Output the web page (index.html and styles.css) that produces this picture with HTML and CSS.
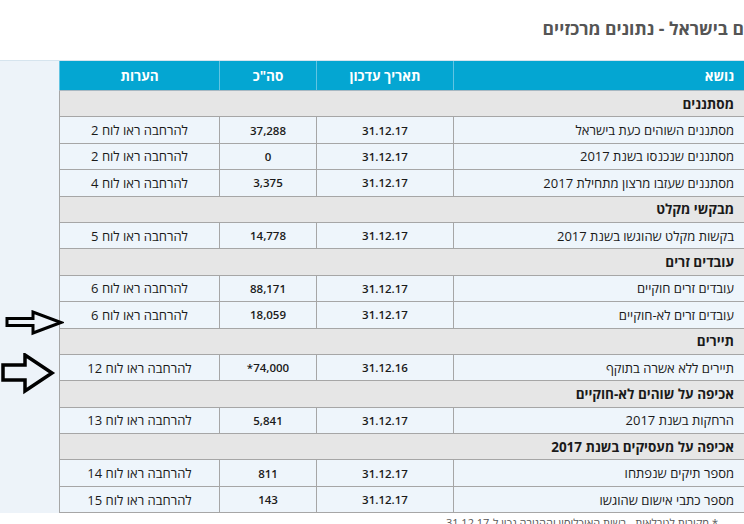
FILE: index.html
```html
<!DOCTYPE html>
<html lang="he">
<head>
<meta charset="utf-8">
<link rel="stylesheet" href="styles.css">
</head>
<body>
<div class="page">
  <header class="top">
    <h1 class="title" dir="rtl">ם בישראל - נתונים מרכזיים</h1>
  </header>
  <section class="panel">
    <table class="data" dir="rtl">
      <colgroup>
        <col class="c-topic"><col class="c-date"><col class="c-total"><col class="c-notes">
      </colgroup>
      <thead>
        <tr><th class="t-topic">נושא</th><th>תאריך עדכון</th><th>סה"כ</th><th>הערות</th></tr>
      </thead>
      <tbody>
        <tr class="sec"><td colspan="4">מסתננים</td></tr>
        <tr><td class="topic">מסתננים השוהים כעת בישראל</td><td class="num">31.12.17</td><td class="num">37,288</td><td>להרחבה ראו לוח 2</td></tr>
        <tr><td class="topic">מסתננים שנכנסו בשנת 2017</td><td class="num">31.12.17</td><td class="num">0</td><td>להרחבה ראו לוח 2</td></tr>
        <tr><td class="topic">מסתננים שעזבו מרצון מתחילת 2017</td><td class="num">31.12.17</td><td class="num">3,375</td><td>להרחבה ראו לוח 4</td></tr>
        <tr class="sec"><td colspan="4">מבקשי מקלט</td></tr>
        <tr><td class="topic">בקשות מקלט שהוגשו בשנת 2017</td><td class="num">31.12.17</td><td class="num">14,778</td><td>להרחבה ראו לוח 5</td></tr>
        <tr class="sec"><td colspan="4">עובדים זרים</td></tr>
        <tr><td class="topic">עובדים זרים חוקיים</td><td class="num">31.12.17</td><td class="num">88,171</td><td>להרחבה ראו לוח 6</td></tr>
        <tr><td class="topic">עובדים זרים לא-חוקיים</td><td class="num">31.12.17</td><td class="num">18,059</td><td>להרחבה ראו לוח 6</td></tr>
        <tr class="sec"><td colspan="4">תיירים</td></tr>
        <tr><td class="topic">תיירים ללא אשרה בתוקף</td><td class="num">31.12.16</td><td class="num">74,000*</td><td>להרחבה ראו לוח 12</td></tr>
        <tr class="sec"><td colspan="4">אכיפה על שוהים לא-חוקיים</td></tr>
        <tr><td class="topic">הרחקות בשנת 2017</td><td class="num">31.12.17</td><td class="num">5,841</td><td>להרחבה ראו לוח 13</td></tr>
        <tr class="sec"><td colspan="4">אכיפה על מעסיקים בשנת 2017</td></tr>
        <tr><td class="topic">מספר תיקים שנפתחו</td><td class="num">31.12.17</td><td class="num">811</td><td>להרחבה ראו לוח 14</td></tr>
        <tr><td class="topic">מספר כתבי אישום שהוגשו</td><td class="num">31.12.17</td><td class="num">143</td><td>להרחבה ראו לוח 15</td></tr>
      </tbody>
    </table>
    <svg class="arrow arrow-1" width="64" height="26" viewBox="0 0 64 26">
      <path d="M7 8.5 H33 V2 L61 12.5 L33 23 V15.5 H7 Z" fill="none" stroke="#000" stroke-width="3" stroke-linejoin="miter"/>
    </svg>
    <svg class="arrow arrow-2" width="56" height="42" viewBox="0 0 56 42">
      <path d="M3 12 H25 V2 L52 20 L25 38 V27 H3 Z" fill="none" stroke="#000" stroke-width="3.5" stroke-linejoin="miter"/>
    </svg>
  </section>
  <p class="foot" dir="rtl">* מקורות לטבלאות - רשות האוכלוסין וההגירה נכון ל-31.12.17</p>
</div>
</body>
</html>
```
FILE: styles.css
```css
html, body {
  margin: 0;
  padding: 0;
  background: #fff;
  overflow: hidden;
  width: 744px;
  height: 524px;
}
.page {
  width: 744px;
  font-family: "Open Sans", "Noto Sans", "DejaVu Sans", sans-serif;
  color: #1a1a1a;
}
.top {
  height: 60px;
  display: flex;
  justify-content: flex-end;
  align-items: center;
}
.title {
  margin: 0;
  font-size: 17.5px;
  font-weight: 700;
  color: #555;
  white-space: nowrap;
  position: relative;
  top: -2px;
}
.panel {
  position: relative;
  background: #edf3f9;
  border-top: 1px solid #d6e4ee;
  padding-left: 59px;
}
.data {
  width: 688px;
  border-collapse: collapse;
  table-layout: fixed;
  font-size: 13px;
}
.c-topic { width: 293px; }
.c-date { width: 137px; }
.c-total { width: 97px; }
.c-notes { width: 160px; }
.data th {
  background: #04a6d2;
  color: #fff;
  font-weight: 700;
  font-size: 13.5px;
  height: 29px;
  padding: 0;
  text-align: center;
  border: 1px solid #62c4e2;
  border-top: 0;
  border-bottom: 1px solid #a8b8c2;
}
.data th.t-topic {
  text-align: right;
  padding-right: 12px;
}
.data td {
  height: 26.4px;
  padding: 0;
  text-align: center;
  background: #eef5fb;
  border: 1px solid #a6a6a6;
  box-sizing: border-box;
  white-space: nowrap;
}
.data td.num {
  font-size: 11.5px;
  font-weight: 600;
}
.data td.topic {
  text-align: right;
  padding-right: 12px;
}
.data tr.sec td {
  background: #e6e6e6;
  font-weight: 700;
  text-align: right;
  padding-right: 12px;
  font-size: 13.5px;
}
.arrow {
  position: absolute;
  left: 0;
}
.arrow-1 { top: 249px; }
.arrow-2 { top: 292px; }
.foot {
  margin: 3px 0 0 0;
  font-size: 11px;
  line-height: 14px;
  color: #555;
  text-align: right;
  padding-right: 26px;
  white-space: nowrap;
}
```
